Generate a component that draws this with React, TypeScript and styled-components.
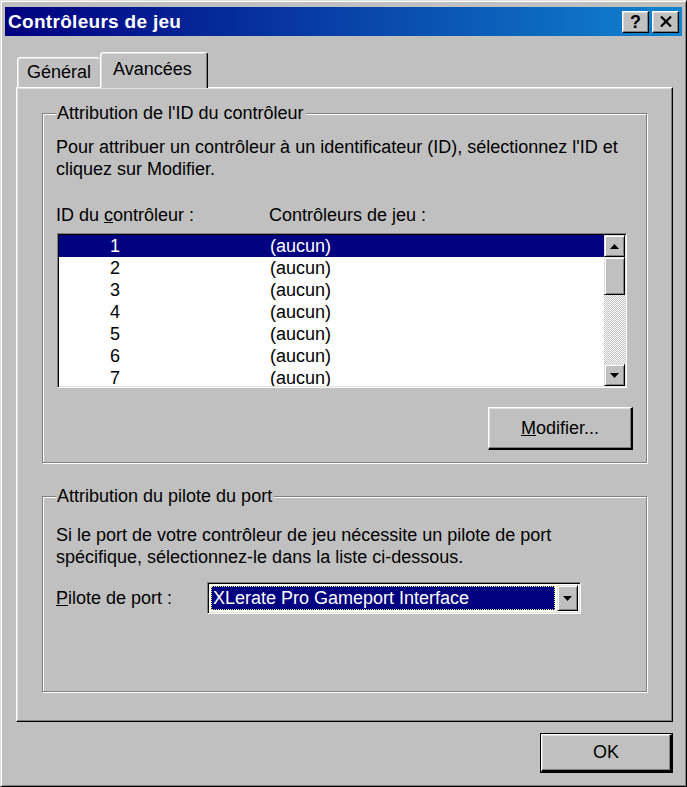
import React from "react";
import styled, { createGlobalStyle } from "styled-components";

const GlobalStyle = createGlobalStyle`
  html, body { margin: 0; padding: 0; background: #c0c0c0; }
  body { font-family: "Liberation Sans", Arial, sans-serif; font-size: 18px; color: #000; }
  * { box-sizing: border-box; }
`;

const Window = styled.div`
  width: 687px;
  height: 787px;
  background: #c0c0c0;
  border: 1px solid;
  border-color: #dfdfdf #000 #000 #dfdfdf;
  box-shadow: inset 1px 1px 0 #fff, inset -1px -1px 0 #808080;
  padding: 6px 4px 4px 4px;
  display: flex;
  flex-direction: column;
`;

const TitleBar = styled.div`
  height: 29px;
  background: linear-gradient(to right, #000080, #1084d0);
  display: flex;
  align-items: center;
  padding: 0 3px 0 3px;
`;

const Title = styled.div`
  flex: 1;
  color: #fff;
  font-weight: bold;
  font-size: 19px;
  letter-spacing: 0.3px;
`;

const CaptionButton = styled.button`
  width: 27px;
  height: 22px;
  padding: 0;
  margin-left: 3px;
  background: #c0c0c0;
  border: 1px solid;
  border-color: #fff #000 #000 #fff;
  box-shadow: inset -1px -1px 0 #808080, inset 1px 1px 0 #dfdfdf;
  display: flex;
  align-items: center;
  justify-content: center;
  font-family: "Liberation Sans", Arial, sans-serif;
  font-weight: bold;
  font-size: 18px;
  line-height: 1;
  color: #000;
`;

const Body = styled.div`
  display: flex;
  flex-direction: column;
  padding: 16px 9px 0 11px;
`;

const TabStrip = styled.div`
  display: flex;
  align-items: flex-end;
  height: 36px;
  padding-left: 1px;
  margin-bottom: -1px;
  position: relative;
  z-index: 1;
`;

const Tab = styled.div<{ $active?: boolean }>`
  height: ${(p) => (p.$active ? "36px" : "30px")};
  width: ${(p) => (p.$active ? "108px" : "83px")};
  background: #c0c0c0;
  border: 1px solid;
  border-bottom: none;
  border-color: #fff #000 transparent #fff;
  border-right-width: ${(p) => (p.$active ? "1px" : "0")};
  border-top-left-radius: 3px;
  border-top-right-radius: 3px;
  box-shadow: ${(p) =>
    p.$active ? "inset -1px 0 0 #808080, inset 1px 1px 0 #dfdfdf" : "inset 1px 1px 0 #dfdfdf"};
  margin-bottom: ${(p) => (p.$active ? "0" : "1px")};
  display: flex;
  align-items: center;
  padding: ${(p) => (p.$active ? "0 0 2px 12px" : "0 0 0 9px")};
`;

const Panel = styled.div`
  height: 635px;
  border: 1px solid;
  border-color: #fff #000 #000 #fff;
  box-shadow: inset -1px -1px 0 #808080, inset 1px 1px 0 #dfdfdf;
  padding: 14px 25px 0 25px;
  display: flex;
  flex-direction: column;
`;

const Group = styled.fieldset<{ $height: number; $gap?: number }>`
  margin: ${(p) => p.$gap ?? 0}px 0 0 0;
  height: ${(p) => p.$height}px;
  min-width: 0;
  border: 1px solid #808080;
  box-shadow: inset 1px 1px 0 #fff, 1px 1px 0 #fff;
  padding: 0 13px 0 13px;
  display: flex;
  flex-direction: column;
`;

const Legend = styled.legend`
  padding: 0 2px 0 1px;
  margin-left: 0;
  line-height: 22px;
  background: #c0c0c0;
`;

const Para = styled.p<{ $top: number }>`
  margin: ${(p) => p.$top}px 0 0 0;
  line-height: 22px;
`;

const Headers = styled.div`
  display: grid;
  grid-template-columns: 213px 1fr;
  margin-top: 24px;
  line-height: 22px;
`;

const ListBox = styled.div`
  margin-top: 7px;
  margin-left: 1px;
  margin-right: 6px;
  height: 155px;
  border: 1px solid;
  border-color: #808080 #fff #fff #808080;
  box-shadow: inset 1px 1px 0 #000, inset -1px -1px 0 #dfdfdf;
  background: #fff;
  padding: 1px;
  display: flex;
`;

const Rows = styled.div`
  flex: 1;
  overflow: hidden;
`;

const Row = styled.div<{ $selected?: boolean }>`
  height: 22px;
  line-height: 22px;
  display: grid;
  grid-template-columns: 211px 1fr;
  background: ${(p) => (p.$selected ? "#000080" : "#fff")};
  color: ${(p) => (p.$selected ? "#fff" : "#000")};
`;

const IdCell = styled.span`
  padding-left: 51px;
`;

const ScrollBar = styled.div`
  width: 21px;
  display: flex;
  flex-direction: column;
  background: #c0c0c0;
`;

const ScrollButton = styled.div<{ $h: number }>`
  height: ${(p) => p.$h}px;
  background: #c0c0c0;
  border: 1px solid;
  border-color: #dfdfdf #000 #000 #dfdfdf;
  box-shadow: inset 1px 1px 0 #fff, inset -1px -1px 0 #808080;
  display: flex;
  align-items: center;
  justify-content: center;
`;

const Track = styled.div`
  flex: 1;
  background: repeating-conic-gradient(#fff 0 25%, #c0c0c0 0 50%) 0 0 / 2px 2px;
`;

const ButtonRow = styled.div`
  display: flex;
  justify-content: flex-end;
  margin-top: 19px;
`;

const PushButton = styled.button<{ $w: number; $h: number }>`
  width: ${(p) => p.$w}px;
  height: ${(p) => p.$h}px;
  background: #c0c0c0;
  border: 1px solid;
  border-color: #fff #000 #000 #fff;
  border-width: 1px 2px 2px 1px;
  box-shadow: inset -1px -1px 0 #808080, inset 1px 1px 0 #dfdfdf;
  font-family: "Liberation Sans", Arial, sans-serif;
  font-size: 18px;
  color: #000;
  padding: 0;
`;

const DefaultButton = styled(PushButton)`
  outline: 1px solid #000;
  outline-offset: 0;
`;

const FieldRow = styled.div`
  display: flex;
  align-items: center;
  margin-top: 14px;
`;

const FieldLabel = styled.span`
  width: 151px;
`;

const Combo = styled.div`
  width: 374px;
  height: 32px;
  border: 1px solid;
  border-color: #808080 #fff #fff #808080;
  box-shadow: inset 1px 1px 0 #000, inset -1px -1px 0 #dfdfdf;
  background: #fff;
  padding: 3px 2px 3px 3px;
  display: flex;
  align-items: stretch;
  gap: 2px;
`;

const ComboValue = styled.div`
  flex: 1;
  background: #000080;
  color: #fff;
  border: 1px dotted #e0e070;
  padding-left: 1px;
  line-height: 22px;
  white-space: nowrap;
`;

const ComboButton = styled(ScrollButton)`
  width: 21px;
  margin: -1px 0;
`;

const Footer = styled.div`
  display: flex;
  justify-content: flex-end;
  padding: 12px 1px 0 0;
`;

const Arrow = ({ dir }: { dir: "up" | "down" }) => (
  <svg width="9" height="5" viewBox="0 0 9 5">
    {dir === "up" ? (
      <polygon points="4.5,0 9,5 0,5" fill="#000" />
    ) : (
      <polygon points="0,0 9,0 4.5,5" fill="#000" />
    )}
  </svg>
);

const CloseGlyph = () => (
  <svg width="12" height="11" viewBox="0 0 12 11">
    <path d="M1 0.5 L11 10.5 M11 0.5 L1 10.5" stroke="#000" strokeWidth="2.2" />
  </svg>
);

const ids = [1, 2, 3, 4, 5, 6, 7];

export default function App() {
  return (
    <>
      <GlobalStyle />
      <Window>
        <TitleBar>
          <Title>Contrôleurs de jeu</Title>
          <CaptionButton>?</CaptionButton>
          <CaptionButton>
            <CloseGlyph />
          </CaptionButton>
        </TitleBar>
        <Body>
          <TabStrip>
            <Tab>Général</Tab>
            <Tab $active>Avancées</Tab>
          </TabStrip>
          <Panel>
            <Group $height={361}>
              <Legend>Attribution de l'ID du contrôleur</Legend>
              <Para $top={12}>
                Pour attribuer un contrôleur à un identificateur (ID), sélectionnez l'ID et
                <br />
                cliquez sur Modifier.
              </Para>
              <Headers>
                <span>
                  ID du <u>c</u>ontrôleur :
                </span>
                <span>Contrôleurs de jeu :</span>
              </Headers>
              <ListBox>
                <Rows>
                  {ids.map((id) => (
                    <Row key={id} $selected={id === 1}>
                      <IdCell>{id}</IdCell>
                      <span>(aucun)</span>
                    </Row>
                  ))}
                </Rows>
                <ScrollBar>
                  <ScrollButton $h={22}>
                    <Arrow dir="up" />
                  </ScrollButton>
                  <ScrollButton $h={38} />
                  <Track />
                  <ScrollButton $h={22}>
                    <Arrow dir="down" />
                  </ScrollButton>
                </ScrollBar>
              </ListBox>
              <ButtonRow>
                <PushButton $w={145} $h={43}>
                  <u>M</u>odifier...
                </PushButton>
              </ButtonRow>
            </Group>
            <Group $height={207} $gap={22}>
              <Legend>Attribution du pilote du port</Legend>
              <Para $top={17}>
                Si le port de votre contrôleur de jeu nécessite un pilote de port
                <br />
                spécifique, sélectionnez-le dans la liste ci-dessous.
              </Para>
              <FieldRow>
                <FieldLabel>
                  <u>P</u>ilote de port :
                </FieldLabel>
                <Combo>
                  <ComboValue>XLerate Pro Gameport Interface</ComboValue>
                  <ComboButton $h={26}>
                    <Arrow dir="down" />
                  </ComboButton>
                </Combo>
              </FieldRow>
            </Group>
          </Panel>
          <Footer>
            <DefaultButton $w={131} $h={38}>
              OK
            </DefaultButton>
          </Footer>
        </Body>
      </Window>
    </>
  );
}
